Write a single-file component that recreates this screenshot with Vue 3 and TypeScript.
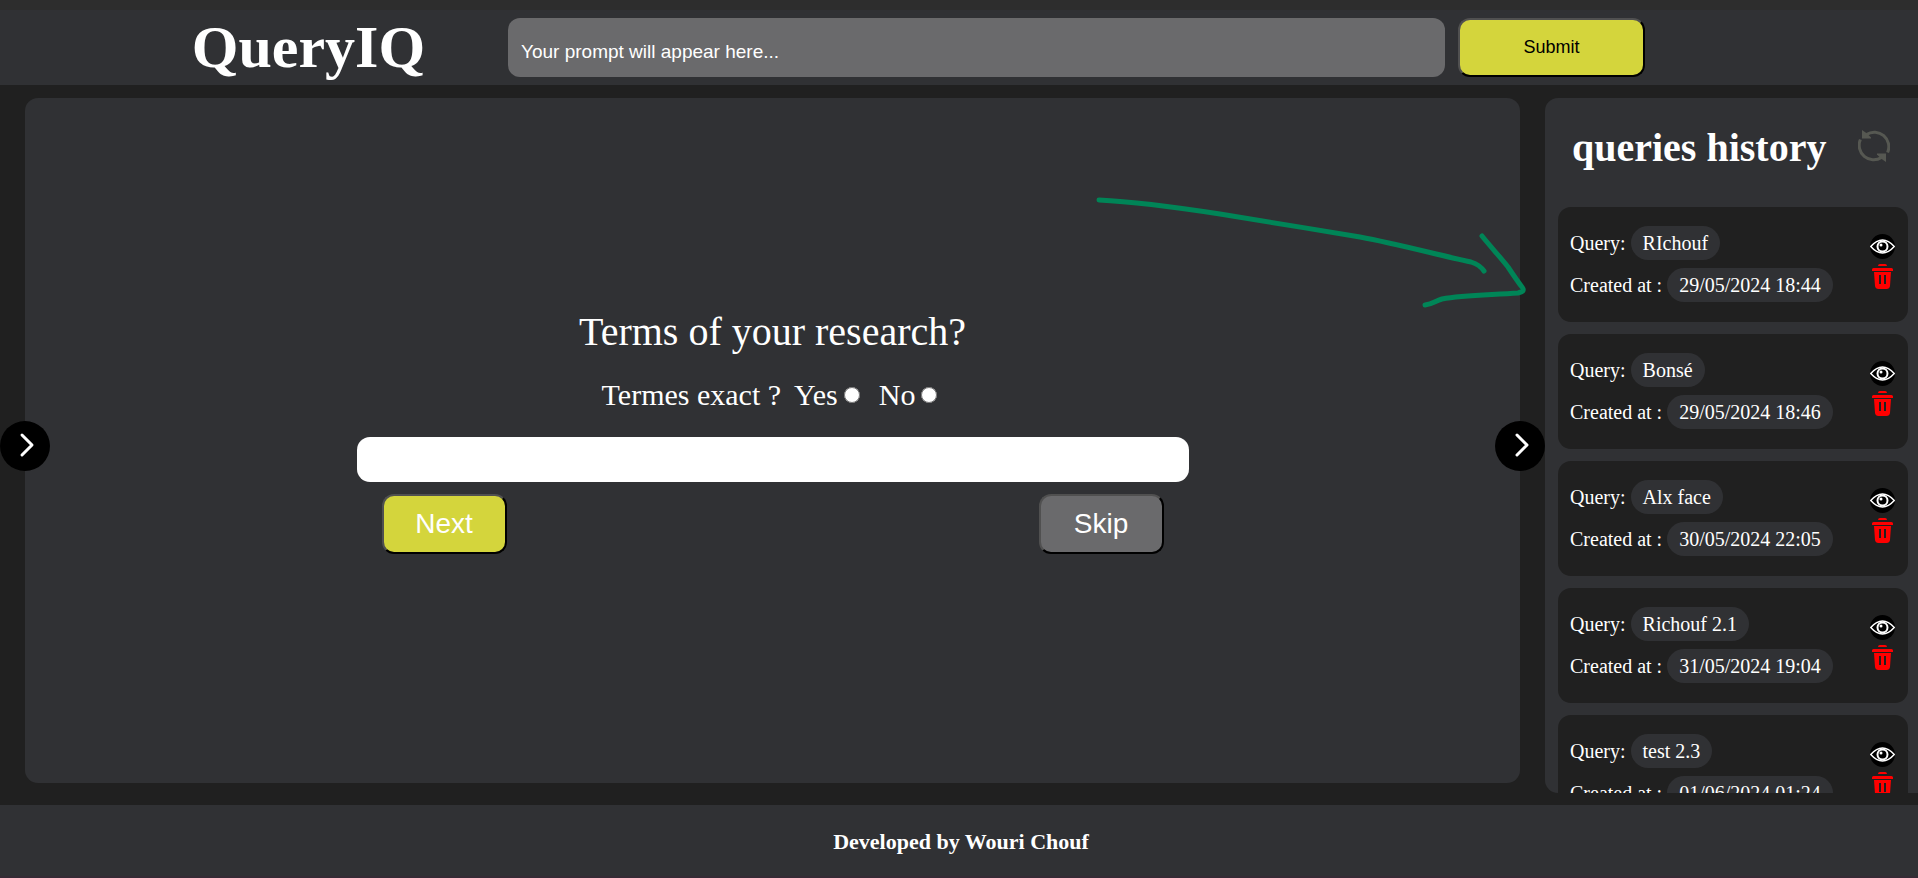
<script setup lang="ts">
import { ref } from 'vue'

interface QueryItem {
  name: string
  createdAt: string
}

const exact = ref<string>('')
const term = ref<string>('')
const prompt = ref<string>('')

const queries = ref<QueryItem[]>([
  { name: 'RIchouf', createdAt: '29/05/2024 18:44' },
  { name: 'Bonsé', createdAt: '29/05/2024 18:46' },
  { name: 'Alx face', createdAt: '30/05/2024 22:05' },
  { name: 'Richouf 2.1', createdAt: '31/05/2024 19:04' },
  { name: 'test 2.3', createdAt: '01/06/2024 01:24' },
])

function removeQuery(index: number): void {
  queries.value.splice(index, 1)
}
</script>

<template>
  <div class="page">
    <header class="header">
      <h1 class="brand">QueryIQ</h1>
      <form class="prompt-form" @submit.prevent>
        <input
          v-model="prompt"
          class="prompt"
          type="text"
          aria-label="Prompt"
          placeholder="Your prompt will appear here..."
        />
        <button class="btn submit" type="submit">Submit</button>
      </form>
    </header>

    <div class="body">
      <main class="stage">
        <button class="toggle toggle-left" type="button" aria-label="Open left panel">
          <svg viewBox="0 0 50 50"><path d="M22 14 L32 24 L22 34" /></svg>
        </button>

        <form class="question" @submit.prevent>
          <label class="title" for="term">Terms of your research?</label>
          <div class="exact">
            <span>Termes exact ?</span>
            <label class="choice">Yes<input v-model="exact" type="radio" name="exact" value="yes" /></label>
            <label class="choice">No<input v-model="exact" type="radio" name="exact" value="no" /></label>
          </div>
          <input id="term" v-model="term" class="term" type="text" />
          <div class="actions">
            <button class="btn next" type="submit">Next</button>
            <button class="btn skip" type="button">Skip</button>
          </div>
        </form>

        <button class="toggle toggle-right" type="button" aria-label="Close history panel">
          <svg viewBox="0 0 50 50"><path d="M22 14 L32 24 L22 34" /></svg>
        </button>

        <svg class="arrow" viewBox="0 0 440 120" aria-hidden="true">
          <path d="M6 8 C47 10 88 16 127 22 C175 30 220 37 267 45 C305 52 345 63 378 70 Q387 73 391 79" />
          <path d="M389 44 C397 54 408 66 415 75 C421 84 425 90 429 95 C432 99 429 100 425 101 C399 103 370 103 349 107 C342 109 340 112 332 113" />
        </svg>
      </main>

      <aside class="history">
        <div class="history-head">
          <h2>queries history</h2>
          <button class="icon-btn refresh-btn" type="button" aria-label="Refresh history">
            <svg class="refresh" viewBox="0 0 32 32">
              <path class="arc" d="M8.500 4.500 A14.500 14.500 0 0 1 29.600 22.500" />
              <path class="arc" d="M23.500 27.500 A14.500 14.500 0 0 1 2.400 9.500" />
              <path class="tip" d="M4 0 L4 8.500 L13 8.500 L13 7.500 L9 3.500 Z" />
              <path class="tip" d="M28 32 L28 23.500 L19 23.500 L19 24.500 L23 28.500 Z" />
            </svg>
          </button>
        </div>

        <ul class="list">
          <li v-for="(query, index) in queries" :key="query.createdAt" class="card">
            <div class="info">
              <div class="row">Query: <span class="pill">{{ query.name }}</span></div>
              <div class="row">Created at : <span class="pill">{{ query.createdAt }}</span></div>
            </div>
            <div class="tools">
              <button class="icon-btn" type="button" aria-label="View query">
                <svg class="tool" viewBox="0 0 50 50">
                  <circle cx="25" cy="25" r="25" fill="#000" />
                  <path d="M1.500 25 Q25 -1 48.500 25 Q25 51 1.500 25 Z" fill="#000" stroke="#fff" stroke-width="3" />
                  <circle cx="25" cy="25" r="10" fill="none" stroke="#fff" stroke-width="4" />
                  <circle cx="22" cy="22" r="3" fill="#fff" />
                </svg>
              </button>
              <button class="icon-btn" type="button" aria-label="Delete query" @click="removeQuery(index)">
                <svg class="tool" viewBox="0 0 25 25">
                  <path
                    fill="#f00"
                    fill-rule="evenodd"
                    d="M8 2 Q8 0 10 0 H15 Q17 0 17 2 Z M3.500 4 H21.500 Q23 4 23 5.500 V7 H2 V5.500 Q2 4 3.500 4 Z M4 8 H21 L20 22 Q19.500 25 16.500 25 H8.500 Q5.500 25 5 22 Z M9 11 V20 H11 V11 Z M14 11 V20 H16 V11 Z"
                  />
                </svg>
              </button>
            </div>
          </li>
        </ul>
      </aside>
    </div>

    <footer class="footer"><p>Developed by Wouri Chouf</p></footer>
  </div>
</template>

<style>
body {
  margin: 0;
  background: #202020;
}
</style>

<style scoped>
.page {
  box-sizing: border-box;
  display: flex;
  flex-direction: column;
  height: 100vh;
  border-top: 10px solid #2d2d2d;
  border-bottom: 2px solid #352b35;
  background: #202020;
  color: #fff;
  font-family: "Liberation Serif", serif;
  font-size: 20px;
  overflow: hidden;
}

.header {
  display: flex;
  align-items: center;
  justify-content: space-between;
  padding: 8px 273px 8px 10%;
  background: #303134;
}

.brand {
  margin: 0;
  font-size: 60px;
  line-height: 59px;
}

.prompt-form {
  display: flex;
  flex: 0 1 1137px;
  gap: 13px;
}

.prompt {
  box-sizing: border-box;
  flex: 1;
  min-width: 0;
  height: 59px;
  padding: 8px 13px 0;
  border: 0;
  border-radius: 12px;
  background: #6a6a6c;
  color: #fff;
  font: 19px "Liberation Sans", sans-serif;
}

.prompt::placeholder {
  color: #fff;
  opacity: 1;
}

.btn {
  padding: 0;
  border: 2px solid;
  border-color: #505050 #000 #000 #505050;
  border-radius: 12px;
  background: #d4d53c;
  font: 28px "Liberation Sans", sans-serif;
  cursor: pointer;
}

.submit {
  width: 187px;
  color: #000;
  font-size: 18px;
}

.body {
  display: flex;
  flex: 1;
  gap: 25px;
  min-height: 0;
  padding: 13px 0 12px 25px;
}

.stage {
  position: relative;
  display: flex;
  flex: 1;
  flex-direction: column;
  align-items: center;
  justify-content: center;
  margin-bottom: 10px;
  border-radius: 13px;
  background: #303134;
}

.question {
  display: flex;
  flex-direction: column;
  align-items: stretch;
  width: 832px;
  max-width: 90%;
  padding-bottom: 18px;
}

.title {
  align-self: center;
  font-size: 40px;
  line-height: 46px;
}

.exact {
  display: flex;
  align-items: center;
  justify-content: center;
  gap: 13px;
  margin: 23px 0 25px;
  font-size: 30px;
  line-height: 34px;
}

.choice {
  display: flex;
  align-items: center;
}

.choice input {
  width: 16px;
  height: 16px;
  margin: 0 6px;
}

.term {
  box-sizing: border-box;
  height: 45px;
  padding: 0 13px;
  border: 0;
  border-radius: 13px;
  background: #fff;
  font: 20px "Liberation Sans", sans-serif;
}

.actions {
  display: flex;
  justify-content: space-between;
  padding: 12px 25px 0;
}

.next,
.skip {
  width: 125px;
  height: 60px;
  color: #fff;
}

.skip {
  background: #6a6a6c;
}

.toggle {
  position: absolute;
  top: 50%;
  width: 50px;
  height: 50px;
  margin-top: -20px;
  padding: 0;
  border: 0;
  border-radius: 50%;
  background: #000;
  cursor: pointer;
}

.toggle svg {
  display: block;
  fill: none;
  stroke: #fff;
  stroke-width: 3;
  stroke-linecap: round;
  stroke-linejoin: round;
}

.toggle-left {
  left: -25px;
}

.toggle-right {
  right: -25px;
}

.arrow {
  position: absolute;
  top: 94px;
  right: -13px;
  width: 440px;
  height: 120px;
  overflow: visible;
  fill: none;
  stroke: #008557;
  stroke-width: 5;
  stroke-linecap: round;
  stroke-linejoin: round;
  pointer-events: none;
}

.history {
  display: flex;
  flex: 0 0 373px;
  flex-direction: column;
  box-sizing: border-box;
  padding: 0 10px 0 13px;
  border-radius: 13px 0 0 13px;
  background: #303134;
  overflow: hidden;
}

.history-head {
  display: flex;
  align-items: center;
  justify-content: space-between;
  padding: 27px 18px 36px 14px;
}

.history-head h2 {
  margin: 0;
  font-size: 40px;
  line-height: 46px;
}

.icon-btn {
  display: block;
  padding: 0;
  border: 0;
  background: none;
  cursor: pointer;
}

.icon-btn svg {
  display: block;
}

.refresh-btn {
  padding-bottom: 4px;
}

.refresh {
  width: 32px;
  height: 32px;
}

.refresh .arc {
  fill: none;
  stroke: #565852;
  stroke-width: 3;
}

.refresh .tip {
  fill: #565852;
}

.list {
  display: flex;
  flex: 1;
  flex-direction: column;
  gap: 12px;
  min-height: 0;
  margin: 0;
  padding: 0;
  list-style: none;
  overflow-y: auto;
  scrollbar-width: none;
}

.card {
  display: flex;
  flex: none;
  align-items: center;
  justify-content: space-between;
  padding: 19px 13px 20px 12px;
  border-radius: 13px;
  background: #202020;
}

.info {
  display: flex;
  flex-direction: column;
  gap: 8px;
}

.row {
  line-height: 34px;
}

.pill {
  display: inline-block;
  padding: 0 12px;
  border-radius: 17px;
  background: #303134;
}

.tools {
  display: flex;
  flex-direction: column;
  gap: 5px;
  padding-bottom: 5px;
}

.tool {
  width: 25px;
  height: 25px;
}

.footer {
  padding: 25px 0 23px;
  background: #303134;
  text-align: center;
}

.footer p {
  margin: 0 0 0 4px;
  font-size: 22px;
  font-weight: bold;
  line-height: 23px;
}
</style>
